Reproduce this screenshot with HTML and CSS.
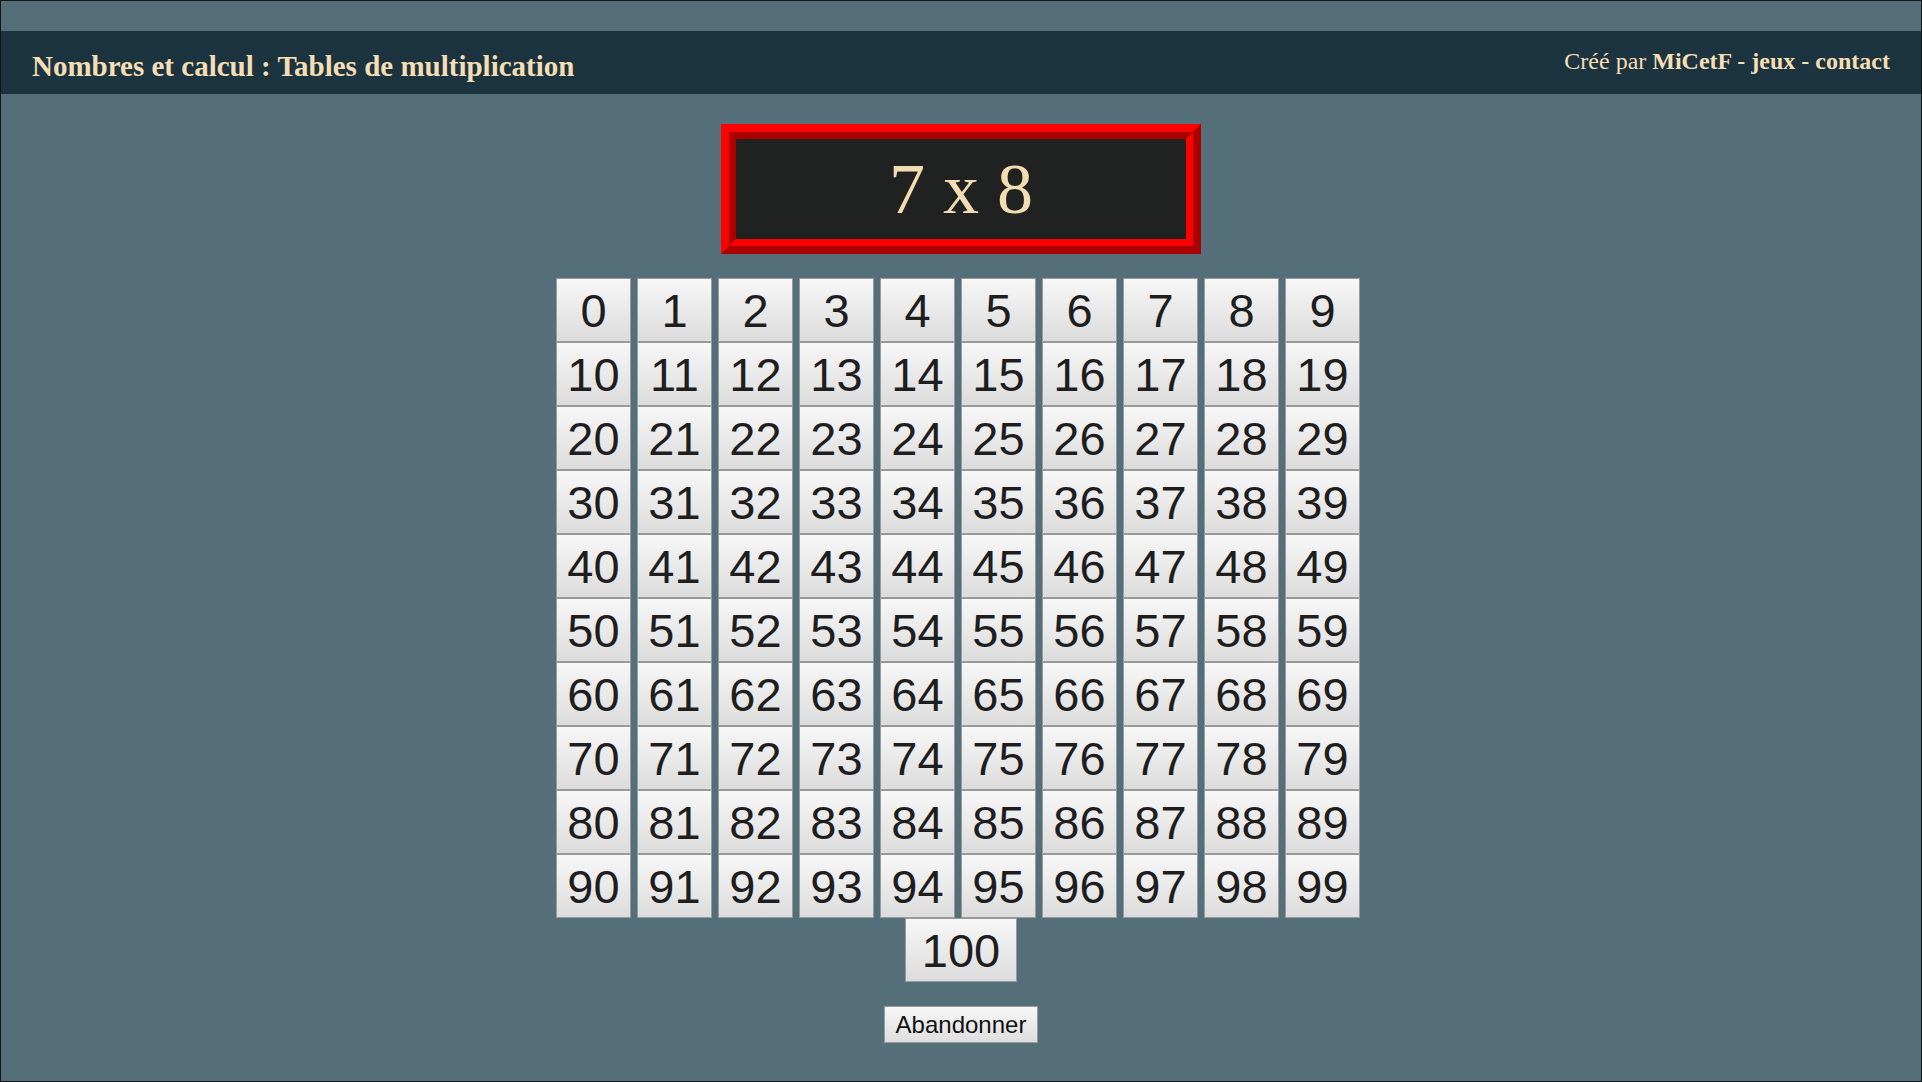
FILE: index.html
```html
<!DOCTYPE html>
<html lang="fr">
<head>
<meta charset="utf-8">
<title>Tables de multiplication</title>
<link rel="stylesheet" href="styles.css">
</head>
<body>
<header class="topbar">
  <h1 class="title">Nombres et calcul : Tables de multiplication</h1>
  <div class="credits">Créé par <b><a href="#">MiCetF</a> - <a href="#">jeux</a> - <a href="#">contact</a></b></div>
</header>
<main class="game">
  <div class="question"><div class="question-inner">7 x 8</div></div>
  <div class="keypad">
    <button class="key">0</button><button class="key">1</button><button class="key">2</button><button class="key">3</button><button class="key">4</button><button class="key">5</button><button class="key">6</button><button class="key">7</button><button class="key">8</button><button class="key">9</button>
    <button class="key">10</button><button class="key">11</button><button class="key">12</button><button class="key">13</button><button class="key">14</button><button class="key">15</button><button class="key">16</button><button class="key">17</button><button class="key">18</button><button class="key">19</button>
    <button class="key">20</button><button class="key">21</button><button class="key">22</button><button class="key">23</button><button class="key">24</button><button class="key">25</button><button class="key">26</button><button class="key">27</button><button class="key">28</button><button class="key">29</button>
    <button class="key">30</button><button class="key">31</button><button class="key">32</button><button class="key">33</button><button class="key">34</button><button class="key">35</button><button class="key">36</button><button class="key">37</button><button class="key">38</button><button class="key">39</button>
    <button class="key">40</button><button class="key">41</button><button class="key">42</button><button class="key">43</button><button class="key">44</button><button class="key">45</button><button class="key">46</button><button class="key">47</button><button class="key">48</button><button class="key">49</button>
    <button class="key">50</button><button class="key">51</button><button class="key">52</button><button class="key">53</button><button class="key">54</button><button class="key">55</button><button class="key">56</button><button class="key">57</button><button class="key">58</button><button class="key">59</button>
    <button class="key">60</button><button class="key">61</button><button class="key">62</button><button class="key">63</button><button class="key">64</button><button class="key">65</button><button class="key">66</button><button class="key">67</button><button class="key">68</button><button class="key">69</button>
    <button class="key">70</button><button class="key">71</button><button class="key">72</button><button class="key">73</button><button class="key">74</button><button class="key">75</button><button class="key">76</button><button class="key">77</button><button class="key">78</button><button class="key">79</button>
    <button class="key">80</button><button class="key">81</button><button class="key">82</button><button class="key">83</button><button class="key">84</button><button class="key">85</button><button class="key">86</button><button class="key">87</button><button class="key">88</button><button class="key">89</button>
    <button class="key">90</button><button class="key">91</button><button class="key">92</button><button class="key">93</button><button class="key">94</button><button class="key">95</button><button class="key">96</button><button class="key">97</button><button class="key">98</button><button class="key">99</button>
  </div>
  <button class="key key-wide">100</button>
  <button class="quit">Abandonner</button>
</main>
</body>
</html>
```

FILE: styles.css
```css
html {
  background: #546e7a;
}

body {
  margin: 0;
  border: 1px solid #141414;
  box-sizing: border-box;
  height: 1082px;
  background: #546e7a;
  font-family: "Liberation Serif", "Times New Roman", serif;
  overflow: hidden;
}

.topbar {
  margin-top: 30px;
  height: 63px;
  box-sizing: border-box;
  padding: 17px 31px 0 31px;
  background: #1c3340;
  display: flex;
  justify-content: space-between;
  align-items: flex-start;
  color: #f5deb3;
}

.title {
  margin: 2px 0 0 0;
  font-size: 29px;
  font-weight: bold;
  line-height: normal;
}

.credits {
  font-size: 24px;
  line-height: normal;
}

.credits a {
  color: #f5deb3;
  text-decoration: none;
}

.game {
  display: flex;
  flex-direction: column;
  align-items: center;
  padding-top: 30px;
}

.question {
  width: 480px;
  height: 130px;
  box-sizing: border-box;
  border: 8px solid;
  border-color: #ff0000 #aa0000 #aa0000 #ff0000;
}

.question-inner {
  height: 100%;
  box-sizing: border-box;
  border: 7px solid;
  border-color: #aa0000 #ff0000 #ff0000 #aa0000;
  background: #202222;
  color: #f3dcb2;
  font-size: 72px;
  line-height: 100px;
  text-align: center;
}

.keypad {
  margin-top: 24px;
  display: grid;
  grid-template-columns: repeat(10, 81px);
  grid-auto-rows: 64px;
  width: 810px;
}

.key {
  width: 75px;
  height: 64px;
  margin: 0;
  padding: 0;
  border: 1px solid #9a9a9a;
  border-radius: 0;
  background: linear-gradient(#f7f7f7, #dcdcdc);
  color: #1e1e1e;
  font-family: "Liberation Sans", Arial, sans-serif;
  font-size: 47px;
  line-height: 64px;
  text-align: center;
  cursor: pointer;
}

.key-wide {
  width: 112px;
}

.quit {
  margin-top: 24px;
  width: 154px;
  height: 37px;
  padding: 0;
  border: 1px solid #9a9a9a;
  border-radius: 0;
  background: linear-gradient(#f7f7f7, #dedede);
  color: #111;
  font-family: "Liberation Sans", Arial, sans-serif;
  font-size: 24px;
  line-height: 35px;
  cursor: pointer;
}
```
